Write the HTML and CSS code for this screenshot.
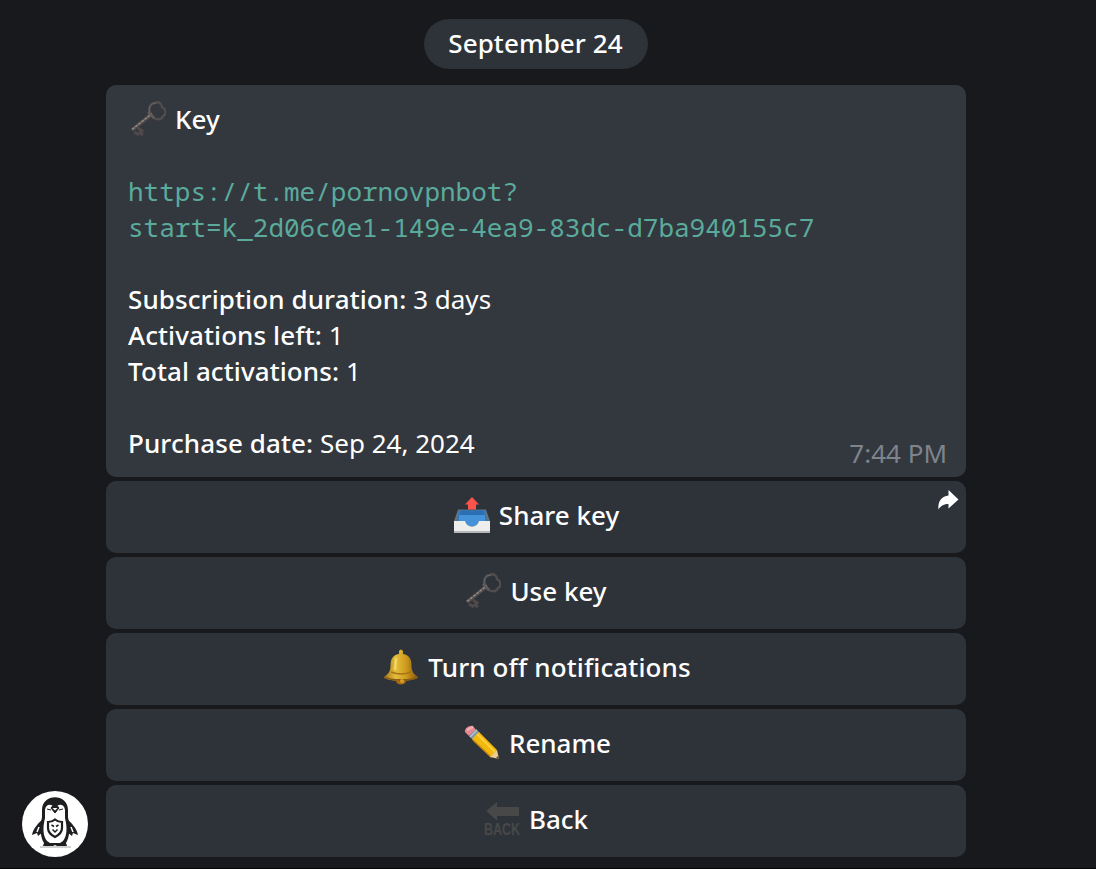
FILE: index.html
```html
<!DOCTYPE html>
<html lang="en">
<head>
<meta charset="utf-8">
<title>Key</title>
<link rel="stylesheet" href="styles.css">
</head>
<body>
<svg class="defs" aria-hidden="true">
  <defs>
    <symbol id="key" viewBox="0 0 36 36">
      <path d="M21.5 14 C17 9 20 2 25 2 C29 0 32 3 32 6 C36 8 37 13 33 15 C32 19 25 20 21.5 14Z" fill="none" stroke="#514e50" stroke-width="2.4"/>
      <path d="M21.5 14 C17 9 20 2 26 2" fill="none" stroke="#6a6667" stroke-width="1"/>
      <path d="M8 27 L12 30 L10 32 L13 34 M4 31 L9 34" fill="none" stroke="#4f494b" stroke-width="3.2"/>
      <path d="M2 29 L22 13" stroke="#554d4b" stroke-width="3.6"/>
      <path d="M2 28.5 L22 12.5" stroke="#918985" stroke-width="1.4" stroke-dasharray="3 1"/>
      <path d="M18 11 L24 17" stroke="#625b5a" stroke-width="2.5"/>
    </symbol>
  </defs>
</svg>
<main class="chat">
  <div class="date">September 24</div>
  <div class="row">
    <svg class="avatar" viewBox="0 0 66 66" role="img" aria-label="Penguin">
      <circle cx="33" cy="33" r="33" fill="#fff"/>
      <path d="M18 56H49" stroke="#d2d2d2" stroke-width="2"/>
      <path d="M22 27 C16 32 11 38 10 44 L15 42 L16 45 L21 41Z M44 27 C50 32 55 38 56 44 L51 42 L50 45 L45 41Z" fill="#1d1e20"/>
      <path d="M17 36 L15 41 M49 36 L51 41" stroke="#fff" stroke-width="1.5"/>
      <path d="M20 19 C20 2 46 2 46 19 V26 C48 36 48 46 44 52 L45 55 H35 L33 54 L31 55 H21 L22 52 C18 46 18 36 20 26Z" fill="#1d1e20"/>
      <path d="M23 19 C24 12 30 13 33 17 C36 13 42 12 43 19 V27 C45.500 37 45 45 41 50 L38 52 H28 L25 50 C21 45 20.500 37 23 27Z" fill="#fff"/>
      <path d="M29 17 L33 12 L37 17 L33 22Z M25 18 L29 19 M37 19 L41 18" fill="#1d1e20" stroke="#1d1e20"/>
      <path d="M30.500 17H35.500L33 19.500Z" fill="#fff"/>
      <path d="M26 31 Q30 31 33 28.500 Q36 31 40 31 V37 C40 41 37 44 33 46 C29 44 26 41 26 37Z" fill="#fff" stroke="#1d1e20" stroke-width="2.200"/>
      <path d="M29.500 34 L32 35.500 M36.500 34 L34 35.500 M30.500 38.500 L33 41 L35.500 38.500" fill="none" stroke="#1d1e20" stroke-width="1.500"/>
    </svg>
    <div class="message">
      <div class="bubble">
        <p class="line title"><svg class="icon"><use href="#key"/></svg><b>Key</b></p>
        <p class="line link">https://t.me/pornovpnbot?<br>start=k_2d06c0e1-149e-4ea9-83dc-d7ba940155c7</p>
        <p class="line"><b>Subscription duration:</b> 3 days<br><b>Activations left:</b> 1<br><b>Total activations:</b> 1</p>
        <p class="line"><b>Purchase date:</b> Sep 24, 2024</p>
        <time class="time">7:44 PM</time>
      </div>
      <div class="button share-key">
        <svg class="icon" viewBox="0 0 36 36">
          <path d="M4 12.500H32L36 24V35.500H0V24Z" fill="#65737b"/>
          <path d="M5 13.500H31L33 24H3Z" fill="#2f78bd"/>
          <path d="M7 13.500H29L30 18H6Z" fill="#2a6fb3"/>
          <path d="M5 18H31V24H25L22 29H14L11 24H5Z" fill="#4592d8"/>
          <path d="M0 24H11C12 27 14 29.500 18 29.500S24 27 25 24H36V35H0Z" fill="#eeeeec"/>
          <path d="M0 35H36" stroke="#b5b8b9" stroke-width="2"/>
          <path d="M18 0L25 7.500H22V12.500H14V7.500H11Z" fill="#f9534b"/>
        </svg>
        <span>Share key</span>
        <svg class="share" viewBox="0 0 20 20"><path d="M10.500 0L20.500 9.500L10.500 18.500V14C6 14 3 15.500 .500 19.500C-.500 11 4 6 10.500 5.500Z" fill="#fff"/></svg>
      </div>
      <div class="button"><svg class="icon"><use href="#key"/></svg><span>Use key</span></div>
      <div class="button bell">
        <svg class="icon" viewBox="0 0 36 36">
          <defs><linearGradient id="gold"><stop offset="0" stop-color="#a87618"/><stop offset=".35" stop-color="#e3be3c"/><stop offset=".65" stop-color="#cf9a1c"/><stop offset="1" stop-color="#85570f"/></linearGradient></defs>
          <ellipse cx="18" cy="32" rx="5" ry="3.500" fill="#a96d12"/>
          <path d="M16 5V2Q18-1 20 2V5C27 6 28.500 11 28.500 17C28.500 23 31 25 35 28C34 33 2 33 1 28C5 25 7.500 23 7.500 17C7.500 11 9 6 16 5Z" fill="url(#gold)"/>
          <path d="M1.500 28C8 32 28 32 34.500 28" fill="none" stroke="#8b5c12" stroke-width="1.800"/>
          <path d="M8 23Q18 27 28 23" fill="none" stroke="#a87414" stroke-width="1.500"/>
          <path d="M13 9L12 21" stroke="#f3d75f" stroke-width="2.500"/>
          <circle cx="19" cy="32" r="2" fill="#d99d29"/>
        </svg>
        <span>Turn off notifications</span>
      </div>
      <div class="button rename">
        <svg class="icon" viewBox="0 0 36 36">
          <path d="M1 7C0 4 5 0 9 1L12 5L5 11Z" fill="#e58a91"/>
          <path d="M3 5L9 2" stroke="#f4b0b2" stroke-width="2"/>
          <path d="M5 11L12 4L16 8L9 15Z" fill="#8297ad"/>
          <path d="M6 12L13 5" stroke="#b4c3cc" stroke-width="1.500"/>
          <path d="M8 14L15 7L33 25L27 32Z" fill="#f2b80e"/>
          <path d="M13 9L31 27" stroke="#fdd03a" stroke-width="2"/>
          <path d="M9 15L27 32" stroke="#c58a12" stroke-width="1.500"/>
          <path d="M33 25L35 34L26 32Z" fill="#efcc91"/>
          <path d="M32 33L34 31L35 34Z" fill="#50402d"/>
        </svg>
        <span>Rename</span>
      </div>
      <div class="button">
        <svg class="icon" viewBox="0 0 36 36">
          <path d="M2 10L13 1V6H35V15H13V19.500Z" fill="#484848"/>
          <text class="back-text" x="0" y="34" textLength="36" lengthAdjust="spacingAndGlyphs">BACK</text>
        </svg>
        <span>Back</span>
      </div>
    </div>
  </div>
</main>
</body>
</html>
```
FILE: styles.css
```css
* { box-sizing: border-box; }
body {
  margin: 0;
  background: #18191d;
  color: #fff;
  font: 400 26px/36px "Noto Sans", "Open Sans", sans-serif;
}
.defs { position: absolute; width: 0; height: 0; }
.chat { height: 869px; padding-top: 19px; border-bottom: 1px solid #050506; }
.date {
  width: 224px;
  height: 50px;
  margin: 0 0 16px 424px;
  border-radius: 25px;
  background: #2e333a;
  font-weight: 500;
  letter-spacing: 0.09px;
  line-height: 48px;
  text-align: center;
  text-indent: -1px;
}
.row { display: flex; align-items: flex-end; gap: 18px; padding-left: 22px; }
.avatar { width: 66px; height: 66px; flex: none; }
.message { width: 860px; display: flex; flex-direction: column; gap: 4px; }
.bubble {
  position: relative;
  height: 392px;
  padding: 16px 22px;
  border-radius: 10px;
  background: #33373e;
}
.line { margin: 0 0 36px; }
.title { display: flex; gap: 9px; padding-left: 2px; }
.link {
  color: #5aab9c;
  font-family: "Noto Sans Mono", "Noto Sans Mono CJK SC", "DejaVu Sans Mono", monospace;
}
b { font-weight: 500; letter-spacing: 0.1px; }
.time { position: absolute; right: 19px; bottom: 6px; color: #7d848c; }
.icon { width: 36px; height: 36px; flex: none; overflow: visible; }
.button {
  position: relative;
  display: flex;
  justify-content: center;
  gap: 9px;
  height: 72px;
  padding-top: 16px;
  border-radius: 10px;
  background: #2e333a;
  font-weight: 500;
}
.share-key { padding-left: 1px; }
.bell { padding-left: 2px; letter-spacing: 0.12px; }
.rename { padding-left: 3px; }
.share { position: absolute; top: 9px; right: 8px; width: 20px; height: 20px; overflow: visible; }
.back-text { fill: #484848; font: 700 17px "Liberation Sans", sans-serif; }
```
